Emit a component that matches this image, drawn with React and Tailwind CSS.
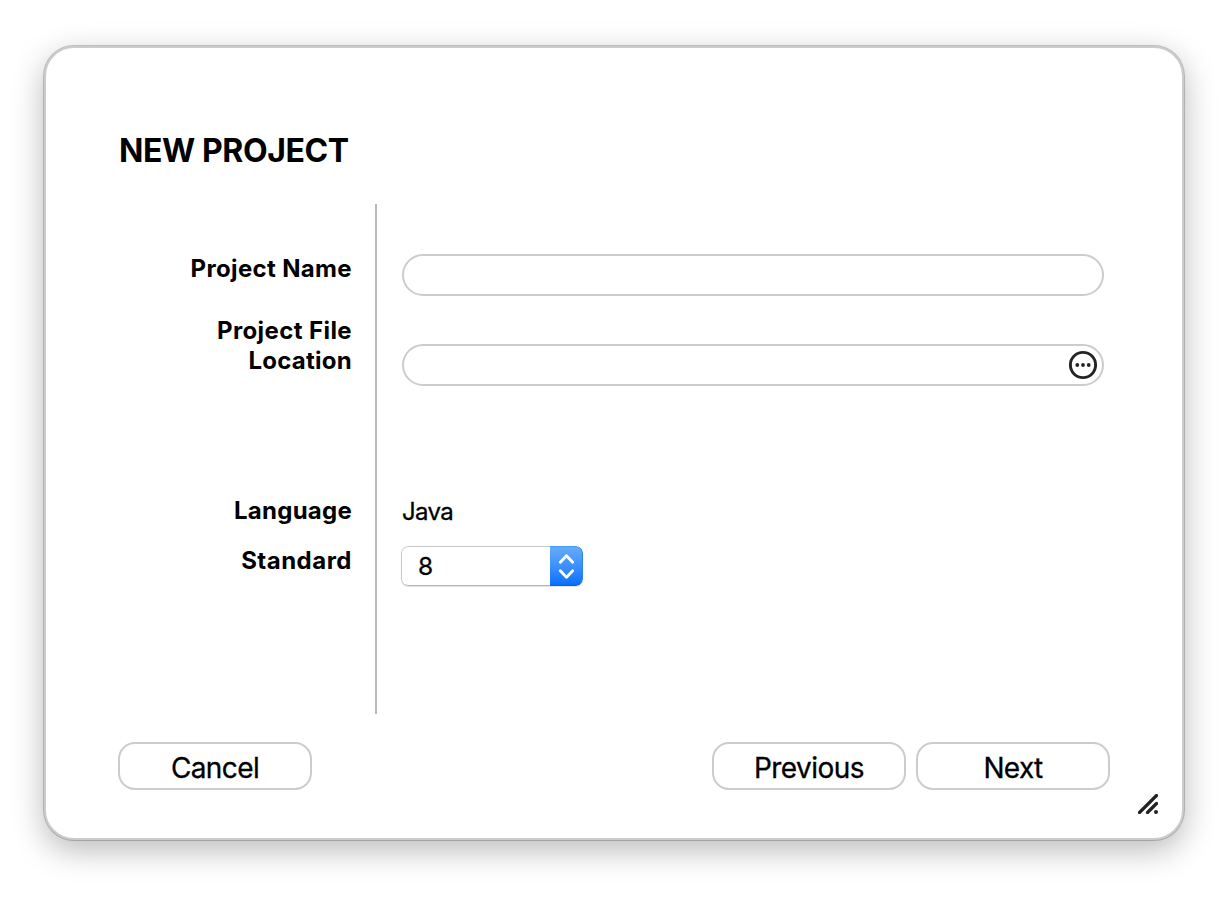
import React from "react";

function DialogButton({ children, textClass }) {
  return (
    <button className="flex h-[48px] w-[194px] items-center justify-center rounded-[17px] border-2 border-[#cccccc] bg-white pt-[3px] text-[28px] leading-[34px]">
      <span className={textClass}>{children}</span>
    </button>
  );
}

function StandardSelect() {
  return (
    <button className="mt-[19px] -ml-px flex h-[40px] w-[182px] overflow-hidden rounded-[7px] text-left shadow-[0_1px_1px_rgba(0,0,0,0.12)]">
      <span className="flex h-full w-[149px] items-center rounded-l-[7px] border border-r-0 border-[#c8c8c8] border-b-[#b4b4b4] pl-[16px] text-[24.5px] leading-[30px] [-webkit-text-stroke:0.3px_black]">
        8
      </span>
      <span className="flex h-full w-[33px] items-center justify-center rounded-r-[7px] border border-l-0 border-t-[#4a9bf5] border-r-[#2a83f2] border-b-[#0761e6] bg-linear-to-b from-[#64acf9] to-[#056fff]">
        <svg width="32" height="38" viewBox="0 0 32 38" fill="none" stroke="white" strokeWidth="2.8" strokeLinecap="round" strokeLinejoin="round">
          <path d="M10.3 15.2 16.5 8.7 22.7 15.2M10.3 23.8 16.5 30.3 22.7 23.8" />
        </svg>
      </span>
    </button>
  );
}

export default function App() {
  return (
    <main className="flex h-[902px] w-[1228px] overflow-hidden bg-white pt-[46px] pl-[44px] font-['Inter','Liberation_Sans',sans-serif] text-black">
      <section className="flex h-[794px] w-[1140px] shrink-0 flex-col rounded-[30px] border-2 border-[#cccccc] bg-white pl-[72px] shadow-[0_0_0_1px_rgba(0,0,0,0.2),0_10px_32px_rgba(0,0,0,0.28)]">
        <h1 className="mt-[83px] h-[39px] pl-px text-[32px] leading-[39px] font-bold whitespace-nowrap">
          <span className="tracking-[-0.4px]">NEW PROJECT</span>
        </h1>
        <div className="mt-[34px] flex h-[510px]">
          <div className="flex w-[259px] flex-col border-r-2 border-[#b8b8b8] pt-[50px] pr-[23px] text-right text-[24px] leading-[30px] font-bold whitespace-nowrap">
            <label className="tracking-[0.35px]">Project Name</label>
            <label className="mt-[32px]">
              <span className="tracking-[0.4px]">Project File</span>
              <br />
              <span className="tracking-[0.25px]">Location</span>
            </label>
            <div className="mt-[120px] tracking-[0.25px]">Language</div>
            <label className="mt-[20px] tracking-[0.5px]">Standard</label>
          </div>
          <div className="ml-[25px] flex w-[702px] flex-col pt-[50px]">
            <input aria-label="Project Name" className="h-[42px] w-full rounded-[21px] border-2 border-[#cccccc] px-4 text-[24px] outline-none" />
            <div className="mt-[48px] flex h-[42px] w-full items-center rounded-[21px] border-2 border-[#cccccc] pr-[4px]">
              <input aria-label="Project File Location" className="h-full min-w-0 flex-1 bg-transparent pl-4 text-[24px] outline-none" />
              <button aria-label="Browse">
                <svg width="30" height="30" viewBox="0 0 30 30" fill="#242424">
                  <circle cx="15" cy="15" r="12.6" fill="none" stroke="#242424" strokeWidth="2.9" />
                  <circle cx="9.3" cy="15" r="1.9" />
                  <circle cx="15" cy="15" r="1.9" />
                  <circle cx="20.7" cy="15" r="1.9" />
                </svg>
              </button>
            </div>
            <div className="mt-[111px] h-[30px] text-[24px] leading-[30px] [-webkit-text-stroke:0.3px_black]">
              <span className="tracking-[-0.65px]">Java</span>
            </div>
            <StandardSelect />
          </div>
        </div>
        <div className="mt-[28px] flex w-[992px] shrink-0 [-webkit-text-stroke:0.3px_black]">
          <DialogButton textClass="tracking-[-0.6px]">Cancel</DialogButton>
          <div className="ml-auto flex gap-[10px]">
            <DialogButton textClass="tracking-[-0.55px]">Previous</DialogButton>
            <DialogButton textClass="tracking-[-0.65px]">Next</DialogButton>
          </div>
        </div>
        <svg className="mt-[4px] mr-[24px] shrink-0 self-end" width="20" height="20" viewBox="0 0 20 20" stroke="#222222" strokeWidth="3.2" strokeLinecap="round">
          <path d="M1.5 18.5 18.5 1.5M9.5 18.5 18.5 9.5" />
          <circle cx="18" cy="18" r="2" fill="#222222" stroke="none" />
        </svg>
      </section>
    </main>
  );
}
